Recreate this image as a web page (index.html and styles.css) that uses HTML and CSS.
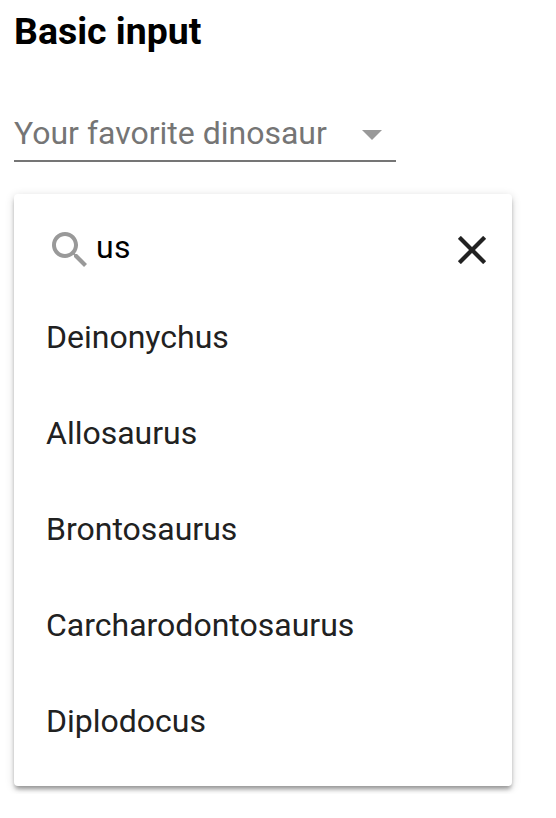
FILE: index.html
```html
<!DOCTYPE html>
<html lang="en">
<head>
<meta charset="utf-8">
<title>Basic input</title>
<link rel="stylesheet" href="styles.css">
</head>
<body>
<main class="page">
  <h1 class="title">Basic input</h1>
  <div class="select">
    <span class="select-label">Your favorite dinosaur</span>
    <svg class="arrow" viewBox="0 0 20 10"><path d="M0 0h20L10 10z"/></svg>
  </div>
  <section class="panel">
    <div class="search">
      <svg class="search-icon" viewBox="3 3 17.49 17.49"><path d="M15.5 14h-.79l-.28-.27C15.41 12.59 16 11.11 16 9.5 16 5.91 13.09 3 9.5 3S3 5.91 3 9.5 5.91 16 9.5 16c1.61 0 3.09-.59 4.23-1.57l.27.28v.79l5 4.99L20.49 19l-4.99-5zm-6 0C7.01 14 5 11.99 5 9.5S7.01 5 9.5 5 14 7.01 14 9.5 11.99 14 9.5 14z"/></svg>
      <span class="query">us</span>
      <svg class="close" viewBox="5 5 14 14"><path d="M19 6.41L17.59 5 12 10.59 6.41 5 5 6.41 10.59 12 5 17.59 6.41 19 12 13.41 17.59 19 19 17.59 13.41 12z"/></svg>
    </div>
    <ul class="options">
      <li>Deinonychus</li>
      <li>Allosaurus</li>
      <li>Brontosaurus</li>
      <li>Carcharodontosaurus</li>
      <li>Diplodocus</li>
    </ul>
  </section>
</main>
</body>
</html>
```
FILE: styles.css
```css
* { box-sizing: border-box; }
body { margin: 0; background: #fff; font-family: Roboto, "Liberation Sans", sans-serif; }
.page { padding: 8px 14px; }
.title { margin: 0; height: 46px; font-size: 37.44px; line-height: 46px; font-weight: 700; color: #000; white-space: nowrap; }
.select { display: flex; align-items: center; justify-content: space-between; width: 382px; height: 57px; margin-top: 51px; padding: 1px 14px 0 0; border-bottom: 2px solid #757575; font-size: 32px; color: #757575; white-space: nowrap; }
.arrow { width: 20px; height: 10px; margin-top: 4px; fill: #999; }
.panel { width: 498px; height: 592px; margin-top: 32px; border-radius: 4px; background: #fff; box-shadow: 0 2px 10px rgba(0,0,0,.16), 0 4px 4px -1px rgba(0,0,0,.34); }
.search { display: flex; align-items: center; height: 95px; padding: 12px 26px 0 38px; font-size: 32px; color: #000; }
.search-icon { width: 35px; height: 35px; margin-top: 3px; fill: #999; }
.query { flex: 1; margin-left: 9px; margin-top: -1px; letter-spacing: .4px; }
.close { width: 28px; height: 28px; margin-top: 5px; fill: #212121; stroke: #212121; stroke-width: .15; }
.options { margin: 0; padding: 0; list-style: none; }
.options li { height: 96px; padding-left: 32px; font-size: 32px; line-height: 96px; color: #212121; }
```
